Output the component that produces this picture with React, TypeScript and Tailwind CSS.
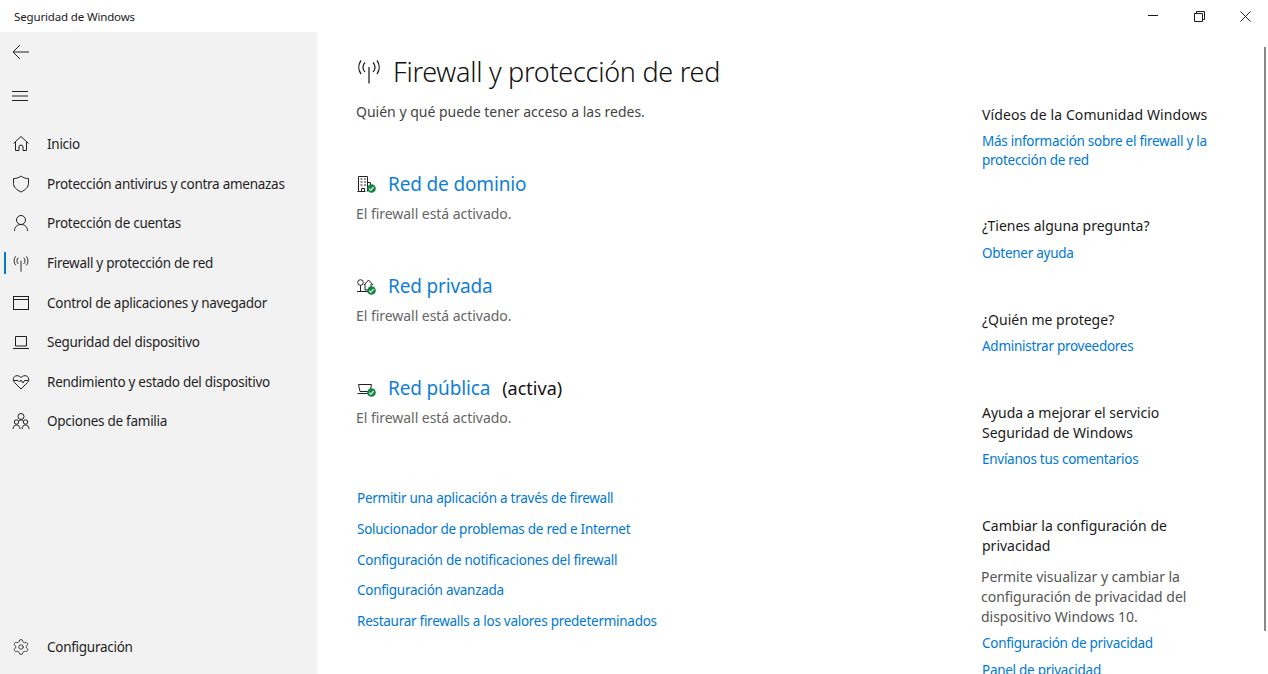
import React from "react";
import { Settings } from "lucide-react";

const S = { fill: "none", stroke: "currentColor", strokeWidth: 1 } as const;
const Ic = ({ children, size = 18, vb = 18 }: { children: React.ReactNode; size?: number; vb?: number }) => (
  <svg width={size} height={size} viewBox={`0 0 ${vb} ${vb}`} {...S} className="shrink-0">{children}</svg>
);

const Wave = () => (
  <>
    <path d="M12 7v16.500" />
    <path d="M8 2.500a6.500 6.500 0 0 0 0 9.500M16 2.500a6.500 6.500 0 0 1 0 9.500" />
    <path d="M4 .5a11.500 11.500 0 0 0 0 13.500M20 .5a11.500 11.500 0 0 1 0 13.500" />
  </>
);

const navIcons: Record<string, React.ReactNode> = {
  home: <path d="M1.500 8.500 9 1.500l7.500 7M3.500 7v8.500h3.500V12a2 2 0 0 1 4 0v3.500h3.500V7" />,
  shield: <path d="M9 1c2 1.700 4.500 2.500 7.500 2.500v5c0 3.500-3 6.500-7.500 8.500-4.500-2-7.500-5-7.500-8.500v-5C4.500 3.500 7 2.700 9 1Z" />,
  user: <><circle cx="9" cy="6" r="4.500" /><path d="M2.500 17c0-4 2.500-6.500 6.500-6.500s6.500 2.500 6.500 6.500" /></>,
  app: <><rect x="1.500" y="2.500" width="15" height="13" /><path d="M1.500 5.500h15" /></>,
  laptop: <><path d="M3.500 3.500h11v9.500h-11z" /><path d="M1 15.500h16" /></>,
  heart: <><path d="M9 16 2.500 9.500C.5 7.500 1 4 3.500 3c2-.8 4 0 5.500 1.500C10.500 3 12.500 2.200 14.500 3c2.500 1 3 4.500 1 6.500L9 16Z" /><path d="M1.500 7.500H6l1.500 1.500L9 7l2 3 1.500-2.500h4" /></>,
  family: <><circle cx="9" cy="4.500" r="3" /><circle cx="4.500" cy="10" r="2.200" /><circle cx="13.500" cy="10" r="2.200" /><path d="M1 17c0-2.500 1.500-4 3.500-4S8 14.500 8 17M10 17c0-2.500 1.500-4 3.500-4s3.500 1.500 3.500 4M6.500 9.500c.6-1 1.400-1.500 2.500-1.500s1.900.5 2.500 1.500" /></>,
};

const items = [
  ["home", "Inicio"],
  ["shield", "Protección antivirus y contra amenazas"],
  ["user", "Protección de cuentas"],
  ["wifi", "Firewall y protección de red"],
  ["app", "Control de aplicaciones y navegador"],
  ["laptop", "Seguridad del dispositivo"],
  ["heart", "Rendimiento y estado del dispositivo"],
  ["family", "Opciones de familia"],
];

const Check = () => (
  <svg width="9" height="9" viewBox="0 0 9 9" className="absolute left-[10px] top-[9px]">
    <circle cx="4.500" cy="4.500" r="4.300" fill="#10893e" />
    <path d="M2.400 4.700 3.900 6.100 6.600 3.200" fill="none" stroke="#fff" strokeWidth="1.200" />
  </svg>
);

const NetIcon = ({ kind }: { kind: string }) => (
  <div className="relative w-[21px] h-[19px] ml-[1px] shrink-0 text-[#222]">
    <svg width="18" height="18" viewBox="0 0 18 18" {...S}>
      {kind === "domain" && (
        <path d="M1.500 16.500v-15h9v15M10.500 7.500h3v6M.5 16.500h8M3.500 4h2M7 4h2M3.500 7h2M7 7h2M3.500 10h2M7 10h2M4.500 16.500v-3h3v3" />
      )}
      {kind === "private" && (
        <>
          <circle cx="3.500" cy="5.500" r="2.800" />
          <path d="M3.500 8.500V14M0 14.500h11M7 8l4.500-5L16 8M8 7v6h6V7" />
        </>
      )}
      {kind === "public" && <path d="M1.500 5.500h13l-1.500 7H3zM.5 14.500h11" />}
    </svg>
    <Check />
  </div>
);

const Network = ({ kind, name, extra }: { kind: string; name: string; extra?: string }) => (
  <div className="mb-[47px]">
    <div className="flex items-center h-[30px]">
      <NetIcon kind={kind} />
      <span className="ml-[10px] text-[19px] text-[#0f7fd6] tracking-[-0.15px]">{name}</span>
      {extra && <span className="ml-[12px] text-[18px] text-[#111]">{extra}</span>}
    </div>
    <div className="mt-[5px] h-[20px] leading-[20px] text-[14px] text-[#666] tracking-[-0.04px]">El firewall está activado.</div>
  </div>
);

const linkCls = "text-[#0078d4] text-[13.500px] tracking-[-0.27px]";
const A = ({ children }: { children: React.ReactNode }) => <div className={`${linkCls} pl-[1px]`}>{children}</div>;

export default function App() {
  return (
    <div className="w-[1268px] h-[674px] overflow-hidden bg-white relative flex flex-col text-[#1a1a1a] text-[14px] font-['Noto_Sans',sans-serif]">
      <div className="h-[32px] shrink-0 flex items-center pl-[14px] text-[11.500px] tracking-[-0.15px] relative">
        <span className="pt-[1px]">Seguridad de Windows</span>
        <div className="ml-auto flex items-center h-full">
          <div className="w-[46px] flex justify-center">
            <svg width="10" height="10" viewBox="0 0 10 10" {...S}><path d="M0 4.500h10" /></svg>
          </div>
          <div className="w-[46px] flex justify-center">
            <svg width="11" height="11" viewBox="0 0 11 11" {...S}><path d="M.5 2.500h8v8h-8zM2.500 2.500v-2h8v8h-2" /></svg>
          </div>
          <div className="w-[46px] flex justify-center">
            <svg width="11" height="11" viewBox="0 0 11 11" {...S}><path d="M.5.5l10 10M10.500.5l-10 10" /></svg>
          </div>
        </div>
      </div>
      <div className="flex-1 flex min-h-0">
        <aside className="w-[317px] shrink-0 bg-[#f2f2f2] flex flex-col text-[13.500px] tracking-[-0.27px] text-[#1f1f1f]">
          <div className="h-[40px] pl-[12px] flex items-center text-[#222]">
            <svg width="17" height="16" viewBox="0 0 17 16" {...S}><path d="M17 8H1M8 1 1 8l7 7" /></svg>
          </div>
          <div className="h-[48px] pl-[12px] flex items-center text-[#222]">
            <svg width="17" height="12" viewBox="0 0 17 12" {...S}><path d="M0 1.500h16M0 6h16M0 10.500h16" /></svg>
          </div>
          <nav className="flex flex-col mt-[4.500px]">
            {items.map(([ic, label]) => (
              <div key={ic} className="h-[39.600px] flex items-center relative pl-[12px]">
                {ic === "wifi" && <div className="absolute left-[4px] top-[9px] w-[2px] h-[22px] bg-[#0078d4]" />}
                {ic === "wifi" ? (
                  <svg width="16" height="16" viewBox="0 0 24 24" {...S} strokeWidth={1.4} className="shrink-0 ml-[1px] mr-[1px] mt-[1px]"><Wave /></svg>
                ) : (
                  <Ic>{navIcons[ic]}</Ic>
                )}
                <span className="ml-[17px]">{label}</span>
              </div>
            ))}
          </nav>
          <div className="mt-auto h-[54px] flex items-center pl-[12px]">
            <Settings size={18} strokeWidth={1.1} className="shrink-0" />
            <span className="ml-[17px]">Configuración</span>
          </div>
        </aside>
        <main className="flex-1 flex min-w-0">
          <section className="w-[665px] pl-[39px] shrink-0">
            <div className="flex items-center h-[40px] mt-[20px] text-[#222]">
              <svg width="24" height="24" viewBox="0 0 24 24" {...S} strokeWidth={1.3} className="ml-[1px] shrink-0"><Wave /></svg>
              <h1 className="ml-[12px] text-[27px] font-light text-[#111] tracking-[-0.27px]">Firewall y protección de red</h1>
            </div>
            <p className="mt-[10px] leading-[20px] text-[#444]">Quién y qué puede tener acceso a las redes.</p>
            <div className="mt-[47px]">
              <Network kind="domain" name="Red de dominio" />
              <Network kind="private" name="Red privada" />
              <Network kind="public" name="Red pública" extra="(activa)" />
            </div>
            <div className="mt-[60px] flex flex-col gap-[10.800px] leading-[20px]">
              <A>Permitir una aplicación a través de firewall</A>
              <A>Solucionador de problemas de red e Internet</A>
              <A>Configuración de notificaciones del firewall</A>
              <A>Configuración avanzada</A>
              <A>Restaurar firewalls a los valores predeterminados</A>
            </div>
          </section>
          <section className="w-[240px] shrink-0 pt-[73px] leading-[20px]">
            <div className="tracking-[0.1px]">Vídeos de la Comunidad Windows</div>
            <div className={`mt-[7px] ${linkCls} leading-[18.500px]`}>Más información sobre el firewall y la protección de red</div>
            <div className="mt-[47px]">¿Tienes alguna pregunta?</div>
            <div className={`mt-[7px] ${linkCls}`}>Obtener ayuda</div>
            <div className="mt-[47px]">¿Quién me protege?</div>
            <div className={`mt-[6px] ${linkCls}`}>Administrar proveedores</div>
            <div className="mt-[47px] w-[220px]">Ayuda a mejorar el servicio Seguridad de Windows</div>
            <div className={`mt-[6px] ${linkCls}`}>Envíanos tus comentarios</div>
            <div className="mt-[47px] w-[220px]">Cambiar la configuración de privacidad</div>
            <div className="mt-[11px] -ml-[1px] w-[225px] text-[#555] tracking-[-0.03px]">Permite visualizar y cambiar la configuración de privacidad del dispositivo Windows 10.</div>
            <div className={`mt-[6px] ${linkCls}`}>Configuración de privacidad</div>
            <div className={`mt-[6.500px] ${linkCls}`}>Panel de privacidad</div>
          </section>
        </main>
      </div>
      <div className="absolute left-[1264px] top-[47px] w-[2px] h-[584px] bg-[#8a8a8a]" />
    </div>
  );
}
